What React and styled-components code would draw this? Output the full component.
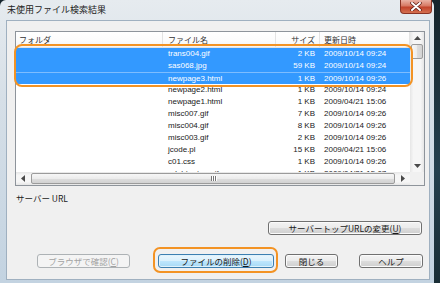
import React from "react";
import styled, { createGlobalStyle, css } from "styled-components";

const GlobalStyle = createGlobalStyle`
  html, body {
    margin: 0;
    padding: 0;
  }
  body {
    background: #1c2b32;
    font-family: "Noto Sans CJK JP", "Liberation Sans", sans-serif;
    color: #1a1a1a;
  }
`;

const Desktop = styled.div`
  width: 440px;
  height: 283px;
  overflow: hidden;
  background: linear-gradient(180deg, #16252c 0%, #24404e 60%, #1a2e36 100%);
`;

const Window = styled.div`
  width: 434px;
  height: 283px;
  display: flex;
  flex-direction: column;
  box-sizing: border-box;
  border-radius: 6px 6px 0 0;
  background: linear-gradient(180deg, #e6ebef 0%, #d6dfe7 35%, #c3d3e1 100%);
`;

const TitleBar = styled.div`
  height: 20px;
  flex: none;
  display: flex;
  align-items: flex-start;
  padding-left: 7px;
`;

const Title = styled.div`
  font-size: 9px;
  line-height: 20px;
  color: #222;
`;

const CloseButton = styled.div`
  margin-left: auto;
  margin-right: 2px;
  width: 32px;
  height: 14px;
  box-sizing: border-box;
  border: 1px solid #8a3324;
  border-top: none;
  border-radius: 0 0 4px 4px;
  background: linear-gradient(180deg, #eab2a4 0%, #d77a64 45%, #c2432b 55%, #d4704f 100%);
  display: flex;
  align-items: center;
  justify-content: center;
`;

const FrameBody = styled.div`
  flex: 1;
  min-height: 0;
  display: flex;
  padding: 0 4px 3px 6px;
`;

const Client = styled.div`
  flex: 1;
  display: flex;
  flex-direction: column;
  border: 1px solid #9fb0c0;
  background: #f0f0f0;
  padding: 10px 4px 0 8px;
`;

const ListArea = styled.div`
  position: relative;
  height: 155px;
  flex: none;
`;

const ListView = styled.div`
  height: 100%;
  box-sizing: border-box;
  border: 1px solid #8e949b;
  background: #fff;
  display: grid;
  grid-template-columns: 1fr 14px;
  grid-template-rows: 1fr 13px;
`;

const Highlight = styled.div`
  position: absolute;
  left: -1px;
  top: 13px;
  width: 399px;
  height: 43px;
  box-sizing: border-box;
  border: 2px solid #f39324;
  border-radius: 8px;
  pointer-events: none;
`;

const Table = styled.div`
  overflow: hidden;
  min-width: 0;
`;

const columns = "147px 113px 44px 90px";

const HeaderRow = styled.div`
  display: grid;
  grid-template-columns: ${columns};
  height: 16px;
  box-sizing: border-box;
  border-bottom: 1px solid #e2e2e2;
  background: linear-gradient(180deg, #ffffff 0%, #fbfbfb 60%, #f3f4f5 100%);
`;

const HeaderCell = styled.div`
  font-size: 8px;
  line-height: 15px;
  white-space: nowrap;
  overflow: hidden;
  border-right: 1px solid #e3e3e3;
  padding: ${(p) => (p.$align === "right" ? "0 4px 0 0" : `0 0 0 ${p.$pl || 3}px`)};
  text-align: ${(p) => p.$align || "left"};
  color: #333;
`;

const Row = styled.div`
  display: grid;
  grid-template-columns: ${columns};
  height: 12px;
  box-sizing: border-box;
  ${(p) =>
    p.$selected &&
    css`
      background: #3399ff;
      color: #fff;
    `}
  ${(p) =>
    p.$focused &&
    css`
      border-top: 1px solid #7dbdff;
    `}
`;

const Cell = styled.div`
  font-family: "Liberation Sans", "Noto Sans CJK JP", sans-serif;
  font-size: 8px;
  line-height: 12px;
  white-space: nowrap;
  overflow: hidden;
  text-align: ${(p) => p.$align || "left"};
  padding: ${(p) => (p.$align === "right" ? "0 5px 0 0" : `0 0 0 ${p.$pl || 3}px`)};
`;

const VScroll = styled.div`
  display: flex;
  flex-direction: column;
  background: linear-gradient(90deg, #e6e6e6 0%, #f6f6f6 25%, #f6f6f6 75%, #e6e6e6 100%);
`;

const HScroll = styled.div`
  display: flex;
  background: linear-gradient(180deg, #e6e6e6 0%, #f6f6f6 25%, #f6f6f6 75%, #e6e6e6 100%);
`;

const Corner = styled.div`
  background: #f0f0f0;
`;

const ArrowBox = styled.div`
  flex: none;
  width: ${(p) => (p.$horizontal ? "14px" : "auto")};
  height: ${(p) => (p.$horizontal ? "auto" : "12px")};
  display: flex;
  align-items: center;
  justify-content: center;
`;

const Thumb = styled.div`
  box-sizing: border-box;
  border: 1px solid #9b9b9b;
  border-radius: 2px;
  display: flex;
  align-items: center;
  justify-content: center;
  gap: 1px;
  ${(p) =>
    p.$horizontal
      ? css`
          flex: 1;
          margin: 1px 1px;
          background: linear-gradient(180deg, #f7f7f7 0%, #ececec 50%, #dedede 51%, #d2d2d2 100%);
        `
      : css`
          height: 15px;
          margin: 0 1px;
          background: linear-gradient(90deg, #f7f7f7 0%, #ececec 50%, #dedede 51%, #d2d2d2 100%);
        `}
`;

const Grip = styled.span`
  width: 1px;
  height: 5px;
  background: #777;
  box-shadow: 1px 0 0 #fff;
`;

const Spacer = styled.div`
  flex: 1;
`;

const Label = styled.div`
  margin-top: 6px;
  height: 12px;
  line-height: 12px;
  font-size: 8.5px;
  padding-left: 1px;
`;

const ActionRow = styled.div`
  margin-top: 17px;
  display: flex;
  justify-content: flex-end;
  padding-right: 3px;
`;

const ButtonRow = styled.div`
  margin-top: 19px;
  display: flex;
  justify-content: flex-end;
  padding-right: 2px;
`;

const Button = styled.button`
  width: ${(p) => p.$w}px;
  height: 14px;
  margin: 0 0 0 ${(p) => p.$gap || 0}px;
  padding: 0;
  box-sizing: border-box;
  font-family: "Noto Sans CJK JP", sans-serif;
  font-size: 8.5px;
  line-height: 12px;
  color: #1a1a1a;
  border: 1px solid #707070;
  border-radius: 3px;
  box-shadow: inset 0 0 0 1px #fbfbfb;
  background: linear-gradient(180deg, #f3f3f3 0%, #ebebeb 50%, #dddddd 51%, #cfcfcf 100%);
  white-space: nowrap;

  ${(p) =>
    p.$primary &&
    css`
      border-color: #3c7fb1;
      box-shadow: inset 0 0 0 1px #dff2fc;
      background: linear-gradient(180deg, #eaf6fd 0%, #d9f0fc 50%, #bee6fd 51%, #a7d9f5 100%);
    `}

  &:disabled {
    color: #a3a3a3;
    border-color: #adb2b5;
    box-shadow: none;
    background: #f4f4f4;
  }

  u {
    text-decoration: underline;
  }
`;

const FocusWrap = styled.span`
  position: relative;
  display: flex;
  margin-left: ${(p) => p.$gap || 0}px;

  &::after {
    content: "";
    position: absolute;
    top: -7px;
    bottom: -5px;
    left: -5px;
    right: -4px;
    border: 2px solid #f39324;
    border-radius: 7px;
    pointer-events: none;
  }
`;

const files = [
  { name: "trans004.gif", size: "2 KB", date: "2009/10/14 09:24", selected: true },
  { name: "sas068.jpg", size: "59 KB", date: "2009/10/14 09:24", selected: true },
  { name: "newpage3.html", size: "1 KB", date: "2009/10/14 09:26", selected: true, focused: true },
  { name: "newpage2.html", size: "1 KB", date: "2009/10/14 09:24" },
  { name: "newpage1.html", size: "1 KB", date: "2009/04/21 15:06" },
  { name: "misc007.gif", size: "7 KB", date: "2009/10/14 09:26" },
  { name: "misc004.gif", size: "8 KB", date: "2009/10/14 09:26" },
  { name: "misc003.gif", size: "2 KB", date: "2009/10/14 09:26" },
  { name: "jcode.pl", size: "15 KB", date: "2009/04/21 15:06" },
  { name: "c01.css", size: "1 KB", date: "2009/10/14 09:26" },
  { name: "ad_btn_top.gif", size: "1 KB", date: "2009/04/21 15:07" },
];

const Arrow = ({ dir }) => {
  const points = {
    up: "0,4 3.5,0 7,4",
    down: "0,0 3.5,4 7,0",
    left: "4,0 0,3.5 4,7",
    right: "0,0 4,3.5 0,7",
  }[dir];
  const horiz = dir === "left" || dir === "right";
  return (
    <svg width={horiz ? 4 : 7} height={horiz ? 7 : 4} viewBox={horiz ? "0 0 4 7" : "0 0 7 4"}>
      <polygon points={points} fill="#4a4a4a" />
    </svg>
  );
};

const CloseIcon = () => (
  <svg width="12" height="9" viewBox="0 0 12 9">
    <path d="M2 1 L10 8 M10 1 L2 8" stroke="#5a1a12" strokeWidth="3.4" strokeLinecap="round" />
    <path d="M2 1 L10 8 M10 1 L2 8" stroke="#fff" strokeWidth="2" strokeLinecap="round" />
  </svg>
);

function App() {
  return (
    <Desktop>
      <GlobalStyle />
      <Window>
        <TitleBar>
          <Title>未使用ファイル検索結果</Title>
          <CloseButton>
            <CloseIcon />
          </CloseButton>
        </TitleBar>
        <FrameBody>
          <Client>
            <ListArea>
              <ListView>
                <Table>
                  <HeaderRow>
                    <HeaderCell>フォルダ</HeaderCell>
                    <HeaderCell $pl={5}>ファイル名</HeaderCell>
                    <HeaderCell $align="right">サイズ</HeaderCell>
                    <HeaderCell $pl={4}>更新日時</HeaderCell>
                  </HeaderRow>
                  {files.map((f) => (
                    <Row key={f.name} $selected={f.selected} $focused={f.focused}>
                      <Cell />
                      <Cell $pl={5}>{f.name}</Cell>
                      <Cell $align="right">{f.size}</Cell>
                      <Cell $pl={4}>{f.date}</Cell>
                    </Row>
                  ))}
                </Table>
                <VScroll>
                  <ArrowBox>
                    <Arrow dir="up" />
                  </ArrowBox>
                  <Thumb />
                  <Spacer />
                  <ArrowBox>
                    <Arrow dir="down" />
                  </ArrowBox>
                </VScroll>
                <HScroll>
                  <ArrowBox $horizontal>
                    <Arrow dir="left" />
                  </ArrowBox>
                  <Thumb $horizontal>
                    <Grip />
                    <Grip />
                    <Grip />
                  </Thumb>
                  <ArrowBox $horizontal>
                    <Arrow dir="right" />
                  </ArrowBox>
                </HScroll>
                <Corner />
              </ListView>
              <Highlight />
            </ListArea>

            <Label>サーバー URL</Label>

            <ActionRow>
              <Button $w={154}>
                サーバートップURLの変更(<u>U</u>)
              </Button>
            </ActionRow>

            <ButtonRow>
              <Button $w={93} disabled>
                ブラウザで確認(<u>C</u>)
              </Button>
              <FocusWrap $gap={28}>
                <Button $w={116} $primary>
                  ファイルの削除(<u>D</u>)
                </Button>
              </FocusWrap>
              <Button $w={53} $gap={11}>
                閉じる
              </Button>
              <Button $w={64} $gap={21}>
                ヘルプ
              </Button>
            </ButtonRow>
          </Client>
        </FrameBody>
      </Window>
    </Desktop>
  );
}

export default App;
